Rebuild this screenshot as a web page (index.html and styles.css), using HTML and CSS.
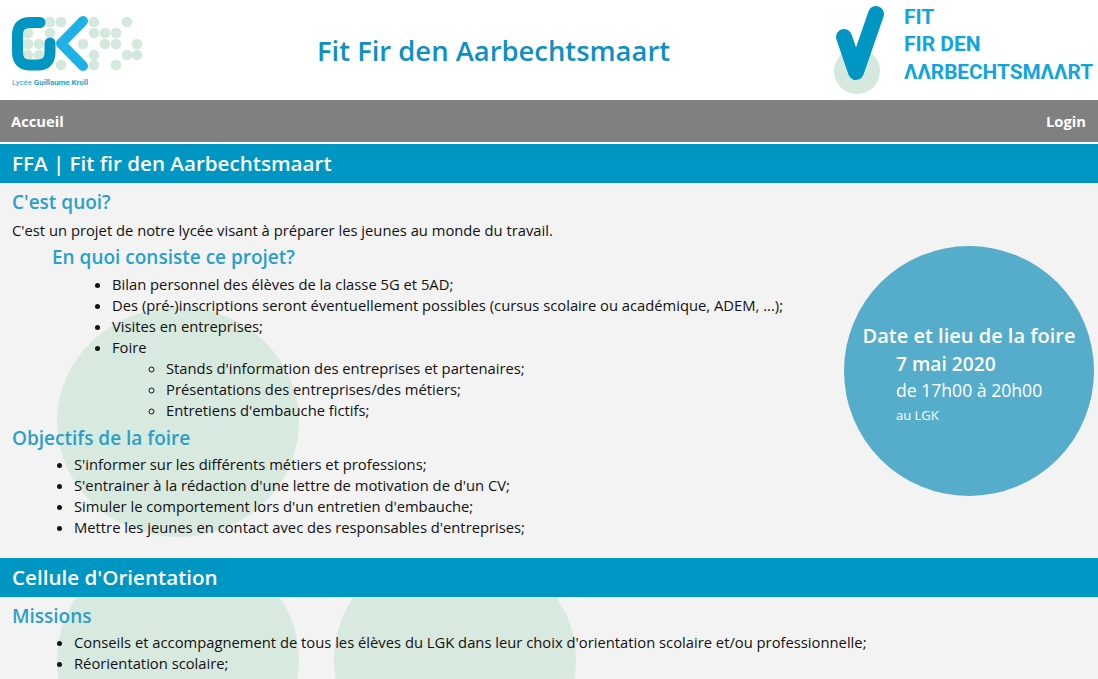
FILE: index.html
```html
<!DOCTYPE html>
<html lang="fr">
<head>
    <meta charset="UTF-8">
    <meta name="viewport" content="width=device-width, initial-scale=1.0">
    <title>Fit Fir den Aarbechtsmaart</title>
    <link rel="stylesheet" href="styles.css">
</head>
<body>
    <!-- En-tête avec les logos -->
    <header class="entete">
        <svg class="logo-lgk" width="160" height="100" viewBox="0 0 160 100">
            <g fill="#d5e8de">
                <circle cx="50" cy="22" r="5.3"/><circle cx="61" cy="22" r="5.3"/><circle cx="94" cy="22" r="5.3"/><circle cx="127" cy="22" r="5.3"/>
                <circle cx="28" cy="33" r="5.3"/><circle cx="50" cy="33" r="5.3"/><circle cx="94" cy="33" r="5.3"/><circle cx="105" cy="33" r="5.3"/><circle cx="116" cy="33" r="5.3"/>
                <circle cx="28" cy="44" r="5.3"/><circle cx="39" cy="44" r="5.3"/><circle cx="83" cy="44" r="5.3"/><circle cx="105" cy="44" r="5.3"/><circle cx="116" cy="44" r="5.3"/><circle cx="137" cy="44" r="5.3"/>
                <circle cx="28" cy="55" r="5.3"/><circle cx="39" cy="55" r="5.3"/><circle cx="94" cy="55" r="5.3"/><circle cx="127" cy="55" r="5.3"/><circle cx="137" cy="55" r="5.3"/>
                <circle cx="61" cy="65" r="5.3"/><circle cx="94" cy="65" r="5.3"/><circle cx="116" cy="65" r="5.3"/>
            </g>
            <path d="M40 22.5H30Q17.5 22.5 17.5 35V52Q17.5 65 30 65H38Q50 65 50 52V43" fill="none" stroke="#0096c4" stroke-width="11" stroke-linecap="round"/>
            <path d="M83 21L61 43.5L83 66" fill="none" stroke="#1eb1e7" stroke-width="10" stroke-linecap="round" stroke-linejoin="round"/>
            <text class="logo-lgk-texte" x="12" y="85" textLength="76" lengthAdjust="spacingAndGlyphs">Lycée <tspan class="logo-lgk-gras">Guillaume Kroll</tspan></text>
        </svg>
        <h1 class="titre">Fit Fir den Aarbechtsmaart</h1>
        <svg class="logo-ffa" width="278" height="100" viewBox="0 0 278 100">
            <circle cx="37" cy="71" r="23" fill="#d5e8de"/>
            <path d="M24 37L36 72L56 14" fill="none" stroke="#0096c4" stroke-width="16" stroke-linecap="round" stroke-linejoin="round"/>
            <g class="logo-ffa-texte">
                <text x="84" y="24">FIT</text>
                <text x="84" y="51">FIR DEN</text>
                <text x="84" y="79" textLength="189" lengthAdjust="spacingAndGlyphs">ΛΛRBECHTSMΛΛRT</text>
            </g>
        </svg>
    </header>

    <!-- Menu -->
    <nav class="menu">
        <a href="#">Accueil</a>
        <a href="#">Login</a>
    </nav>

    <main>
        <section class="bloc">
            <h2 class="bandeau">FFA | Fit fir den Aarbechtsmaart</h2>
            <div class="contenu contenu-ffa">
                <div class="rond rond-gauche"></div>
                <aside class="foire">
                    <div class="foire-titre">Date et lieu de la foire</div>
                    <div class="foire-details">
                        <div class="foire-date">7 mai 2020</div>
                        <div class="foire-heure">de 17h00 à 20h00</div>
                        <div class="foire-lieu">au LGK</div>
                    </div>
                </aside>
                <h3>C'est quoi?</h3>
                <p>C'est un projet de notre lycée visant à préparer les jeunes au monde du travail.</p>
                <h3 class="decale">En quoi consiste ce projet?</h3>
                <ul class="liste-decalee">
                    <li>Bilan personnel des élèves de la classe 5G et 5AD;</li>
                    <li>Des (pré-)inscriptions seront éventuellement possibles (cursus scolaire ou académique, ADEM, ...);</li>
                    <li>Visites en entreprises;</li>
                    <li>Foire
                        <ul>
                            <li>Stands d'information des entreprises et partenaires;</li>
                            <li>Présentations des entreprises/des métiers;</li>
                            <li>Entretiens d'embauche fictifs;</li>
                        </ul>
                    </li>
                </ul>
                <h3>Objectifs de la foire</h3>
                <ul>
                    <li>S'informer sur les différents métiers et professions;</li>
                    <li>S'entrainer à la rédaction d'une lettre de motivation de d'un CV;</li>
                    <li>Simuler le comportement lors d'un entretien d'embauche;</li>
                    <li>Mettre les jeunes en contact avec des responsables d'entreprises;</li>
                </ul>
            </div>
        </section>

        <section class="bloc">
            <h2 class="bandeau">Cellule d'Orientation</h2>
            <div class="contenu contenu-cellule">
                <div class="rond rond-gauche"></div>
                <div class="rond rond-milieu"></div>
                <h3>Missions</h3>
                <ul>
                    <li>Conseils et accompagnement de tous les élèves du LGK dans leur choix d'orientation scolaire et/ou professionnelle;</li>
                    <li>Réorientation scolaire;</li>
                    <li>Informations sur les études et les métiers au Luxembourg et à l'étranger;</li>
                </ul>
            </div>
        </section>
    </main>
</body>
</html>
```

FILE: styles.css
```css
html, body {
    height: 679px;
    overflow: hidden;
}

body {
    margin: 0;
    font-family: "Open Sans", sans-serif;
    font-size: 14.77px;
    line-height: 21px;
    color: #111;
    background-color: #fff;
}

.entete {
    height: 100px;
    display: flex;
    justify-content: space-between;
    align-items: center;
}

.logo-lgk, .logo-ffa {
    flex: none;
}

.logo-lgk-texte {
    font-family: "Roboto", sans-serif;
    font-size: 8px;
    fill: #2aa5cf;
}

.logo-lgk-gras {
    font-weight: bold;
}

.logo-ffa-texte {
    font-family: "Roboto", sans-serif;
    font-size: 21px;
    font-weight: 700;
    fill: #12a5dd;
}

.titre {
    margin: 0 0 0 7px;
    font-size: 27.4px;
    font-weight: 600;
    color: #0f8fc4;
}

.menu {
    height: 42px;
    display: flex;
    justify-content: space-between;
    align-items: center;
    padding: 0 12px 0 11px;
    margin-bottom: 2px;
    background-color: #808080;
}

.menu a {
    color: #fff;
    font-weight: bold;
    text-decoration: none;
}

.bandeau {
    margin: 0;
    height: 39px;
    padding-left: 12px;
    background-color: #0096c4;
    color: #fff;
    font-size: 20.6px;
    font-weight: 600;
    line-height: 39px;
}

.contenu {
    position: relative;
    overflow: hidden;
    background-color: #f3f3f3;
    padding: 6px 12px 0;
}

.contenu-ffa {
    height: 375px;
    box-sizing: border-box;
}

.contenu-cellule {
    height: 120px;
    box-sizing: border-box;
}

.contenu > *:not(.rond):not(.foire) {
    position: relative;
}

.rond {
    position: absolute;
    width: 242px;
    height: 230px;
    border-radius: 50%;
    background-color: #d8e9df;
}

.contenu-ffa .rond-gauche {
    left: 57px;
    top: 124px;
}

.contenu-cellule .rond-gauche {
    left: 57px;
    top: -52px;
}

.rond-milieu {
    left: 334px;
    top: -52px;
}

.foire {
    position: absolute;
    left: 844px;
    top: 63px;
    width: 250px;
    height: 250px;
    box-sizing: border-box;
    padding-top: 76px;
    border-radius: 50%;
    background-color: #55adcb;
    color: #fff;
}

.foire-titre {
    font-size: 20px;
    font-weight: 600;
    line-height: 28px;
    text-align: center;
}

.foire-details {
    padding-left: 52px;
}

.foire-date {
    font-size: 19.2px;
    font-weight: 600;
    line-height: 28px;
}

.foire-heure {
    font-size: 17.6px;
    line-height: 24px;
}

.foire-lieu {
    font-size: 13px;
    line-height: 26px;
}

h3 {
    margin: 0;
    font-size: 19px;
    font-weight: 600;
    line-height: 26px;
    color: #2a9fca;
}

p {
    margin: 5px 0 3px;
}

.decale {
    margin-left: 40px;
}

ul {
    margin: 3px 0 0;
    padding-left: 62px;
}

.liste-decalee {
    padding-left: 100px;
    margin: 4px 0;
}

li ul {
    margin: 0;
    padding-left: 54px;
}
```
